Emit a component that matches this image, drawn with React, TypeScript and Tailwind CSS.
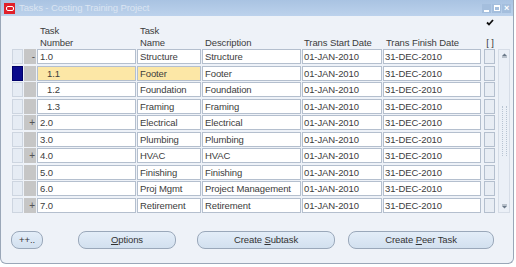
import { Fragment } from "react";

type Row = {
  num: string;
  name: string;
  desc: string;
  sign?: string;
  child?: boolean;
  current?: boolean;
};

const rows: Row[] = [
  { num: "1.0", name: "Structure", desc: "Structure", sign: "-" },
  { num: "1.1", name: "Footer", desc: "Footer", child: true, current: true },
  { num: "1.2", name: "Foundation", desc: "Foundation", child: true },
  { num: "1.3", name: "Framing", desc: "Framing", child: true },
  { num: "2.0", name: "Electrical", desc: "Electrical", sign: "+" },
  { num: "3.0", name: "Plumbing", desc: "Plumbing" },
  { num: "4.0", name: "HVAC", desc: "HVAC", sign: "+" },
  { num: "5.0", name: "Finishing", desc: "Finishing" },
  { num: "6.0", name: "Proj Mgmt", desc: "Project Management" },
  { num: "7.0", name: "Retirement", desc: "Retirement", sign: "+" },
];

const cell = "h-[15px] shrink-0 border border-[#b4bfce] leading-[13px] overflow-hidden whitespace-nowrap";

export default function App() {
  return (
    <div
      className="relative h-[267px] w-[516px] overflow-hidden bg-white text-[9.5px] tracking-[-0.1px] text-[#3c3c3c]"
      style={{ fontFamily: '"Liberation Sans", Arial, sans-serif' }}
    >
      <div className="flex h-[264px] w-[514px] flex-col rounded-b-[6px] border border-t-0 border-[#9aa7b8] bg-[#eef2f8]">
        {/* title bar */}
        <div className="flex h-[16px] shrink-0 items-center bg-gradient-to-b from-[#a9c3e2] to-[#bcd2ec] pl-[3px] pr-[2px]">
          <div className="flex h-[11px] w-[11px] items-center justify-center bg-[#e0202a]">
            <div className="h-[5px] w-[8px] rounded-[2px] border-[1.5px] border-white" />
          </div>
          <span className="ml-[4px] text-[#dbe5f2]">Tasks - Costing Training Project</span>
          <div className="ml-auto flex gap-[1px]">
            <div className="flex h-[9px] w-[9px] items-end justify-center bg-[#a4bedd] pb-[1px]">
              <div className="h-[2px] w-[5px] bg-white" />
            </div>
            <div className="flex h-[9px] w-[9px] items-center justify-center bg-[#a4bedd]">
              <div className="h-[6px] w-[6px] border border-t-2 border-white" />
            </div>
            <div className="flex h-[9px] w-[9px] items-center justify-center bg-[#a4bedd] text-[9px] leading-none font-bold text-white">
              ×
            </div>
          </div>
        </div>

        {/* header */}
        <div className="flex h-[33px] shrink-0 pl-[11px]">
          <div className="w-[25px]" />
          <div className="flex w-[100px] flex-col justify-end pl-[3px] leading-[12px]">
            <span>Task</span>
            <span>Number</span>
          </div>
          <div className="flex w-[65px] flex-col justify-end pl-[3px] leading-[12px]">
            <span>Task</span>
            <span>Name</span>
          </div>
          <div className="flex w-[100px] flex-col justify-end pl-[3px] leading-[12px]">
            <span>Description</span>
          </div>
          <div className="flex w-[81px] flex-col justify-end pl-[2px] leading-[12px]">
            <span>Trans Start Date</span>
          </div>
          <div className="flex w-[101px] flex-col justify-end pl-[3px] leading-[12px]">
            <span>Trans Finish Date</span>
          </div>
          <div className="flex w-[12px] flex-col items-center justify-between leading-[12px]">
            <svg width="8" height="7" viewBox="0 0 8 7" className="mt-[3px]">
              <path d="M1 3.5 L3 5.5 L7 1" stroke="#111" strokeWidth="1.8" fill="none" />
            </svg>
            <span>[ ]</span>
          </div>
        </div>

        {/* grid */}
        <div className="flex shrink-0 pl-[11px]">
          <div className="flex flex-col">
            {rows.map((r, i) => (
              <div
                key={r.num}
                className={i === rows.length - 1 ? "h-[15px]" : i % 2 === 0 ? "h-[17px]" : "h-[16px]"}
              >
                <div className="flex h-[15px] items-stretch">
                  <div
                    className={
                      r.current
                        ? "w-[11px] shrink-0 border border-[#00006a] bg-[#0a0a8c]"
                        : "w-[11px] shrink-0 border border-[#cdd5e0] bg-[#e6ecf4]"
                    }
                  />
                  <div className="ml-[1px] flex w-[12px] shrink-0 items-center justify-end bg-[#c6c6c6] pr-[1px] text-[10px] leading-none text-[#555]">
                    {r.sign}
                  </div>
                  <div
                    className={`${cell} ml-[1px] w-[99px] ${r.child ? "pl-[9px]" : "pl-[2px]"} ${r.current ? "bg-[#fce7a6]" : "bg-white"}`}
                  >
                    {r.num}
                  </div>
                  <div className={`${cell} ml-[1px] w-[64px] pl-[2px] ${r.current ? "bg-[#fce7a6]" : "bg-white"}`}>
                    {r.name}
                  </div>
                  <div className={`${cell} ml-[1px] w-[99px] bg-white pl-[2px]`}>{r.desc}</div>
                  <div className={`${cell} ml-[1px] w-[80px] bg-white pl-[1px]`}>01-JAN-2010</div>
                  <div className={`${cell} ml-[1px] w-[98px] bg-white pl-[1px]`}>31-DEC-2010</div>
                  <div className="ml-[3px] h-[15px] w-[11px] shrink-0 border border-[#b4bfce] bg-[#e8edf4]" />
                </div>
              </div>
            ))}
          </div>

          {/* scrollbar */}
          <div className="ml-[3px] flex h-[164px] w-[12px] flex-col items-center justify-between border border-[#d6dde7] bg-[#ebf0f7] py-[2px]">
            <svg width="7" height="6" viewBox="0 0 7 6">
              <path d="M1 4 L3.5 1.5 L6 4 Z" fill="#6a7888" />
              <rect x="1" y="4.6" width="5" height="0.8" fill="#6a7888" />
            </svg>
            <div className="h-[50px] w-[5px] border-x border-dotted border-[#b8c4d2]" />
            <svg width="7" height="6" viewBox="0 0 7 6">
              <rect x="1" y="0.6" width="5" height="0.8" fill="#6a7888" />
              <path d="M1 2 L3.5 4.5 L6 2 Z" fill="#6a7888" />
            </svg>
          </div>
        </div>

        {/* buttons */}
        <div className="mt-[18px] flex items-center pl-[10px]">
          <Btn className="w-[32px]">
            <span>++..</span>
          </Btn>
          <Btn className="ml-[35px] w-[98px]">
            <span>
              <span className="underline">O</span>ptions
            </span>
          </Btn>
          <Btn className="ml-[21px] w-[138px]">
            <span>
              Create <span className="underline">S</span>ubtask
            </span>
          </Btn>
          <Btn className="ml-[13px] w-[146px] border-[#5f6f85]">
            <span>
              Create <span className="underline">P</span>eer Task
            </span>
          </Btn>
        </div>
      </div>
    </div>
  );
}

function Btn({ className, children }: { className?: string; children: React.ReactNode }) {
  return (
    <div
      className={`flex h-[18px] items-center justify-center rounded-[8px] border border-[#9aa8ba] bg-gradient-to-b from-[#e3edf8] to-[#d2e0ef] text-[#333] ${className ?? ""}`}
    >
      <Fragment>{children}</Fragment>
    </div>
  );
}
